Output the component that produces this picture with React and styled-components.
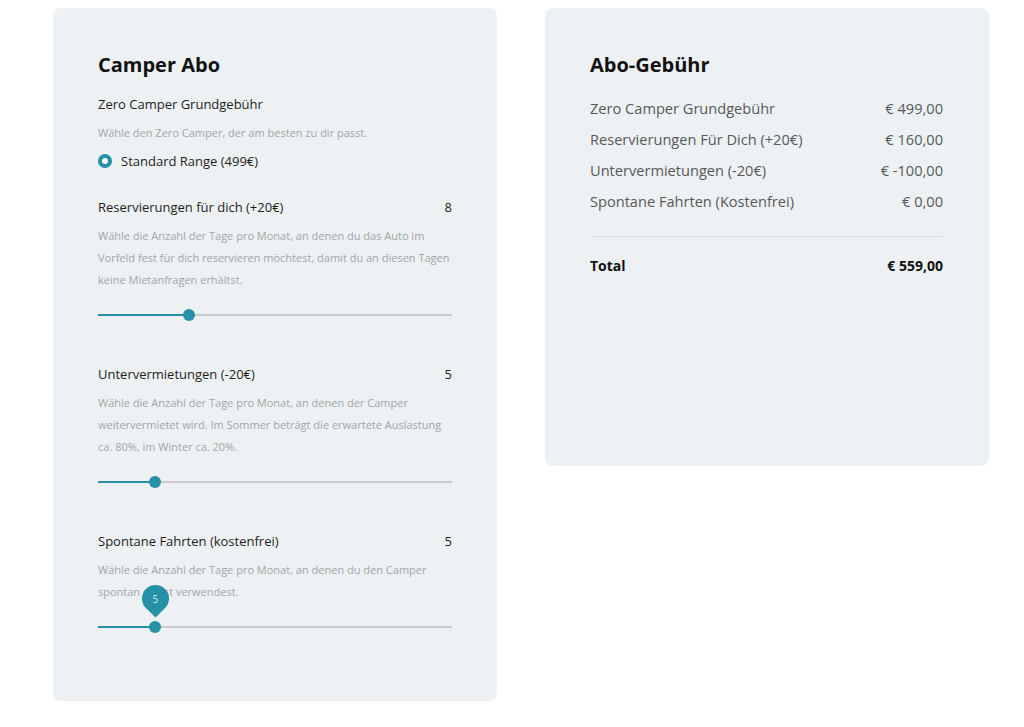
import { useState } from "react"
import styled, { createGlobalStyle } from "styled-components"

const TEAL = "#2590a6"
const MAX_DAYS = 31

const GlobalStyle = createGlobalStyle`
  * {
    box-sizing: border-box;
  }

  body {
    margin: 0;
    background: #fff;
    font-family: "Open Sans", "Noto Sans", sans-serif;
    color: #1c1c1c;
  }
`

function DaySlider({ value, onChange, showTip }) {
  const pct = (value / MAX_DAYS) * 100
  return (
    <SliderWrap>
      <Track>
        <Fill style={{ width: `${pct}%` }} />
      </Track>
      <Thumb style={{ left: `${pct}%` }} />
      {showTip && (
        <Tip style={{ left: `${pct}%` }}>
          <TipValue>{value}</TipValue>
        </Tip>
      )}
      <HiddenRange
        type="range"
        min="0"
        max={MAX_DAYS}
        value={value}
        onChange={(e) => onChange(Number(e.target.value))}
      />
    </SliderWrap>
  )
}

function Option({ title, value, text, onChange, showTip }) {
  return (
    <OptionBlock>
      <OptionHead>
        <Label>{title}</Label>
        <Label>{value}</Label>
      </OptionHead>
      <Hint>{text}</Hint>
      <DaySlider value={value} onChange={onChange} showTip={showTip} />
    </OptionBlock>
  )
}

const euro = (n) =>
  "€ " + n.toLocaleString("de-DE", { minimumFractionDigits: 2, maximumFractionDigits: 2 })

export default function App() {
  const [reserved, setReserved] = useState(8)
  const [sublet, setSublet] = useState(5)
  const [spontan, setSpontan] = useState(5)

  const base = 499
  const total = base + reserved * 20 - sublet * 20

  const rows = [
    ["Zero Camper Grundgebühr", base],
    ["Reservierungen Für Dich (+20€)", reserved * 20],
    ["Untervermietungen (-20€)", -sublet * 20],
    ["Spontane Fahrten (Kostenfrei)", 0],
  ]

  return (
    <>
      <GlobalStyle />
      <Page>
        <Card>
          <Heading>Camper Abo</Heading>
          <Label>Zero Camper Grundgebühr</Label>
          <Hint $tight>Wähle den Zero Camper, der am besten zu dir passt.</Hint>
          <RadioRow>
            <RadioDot />
            <Label>Standard Range (499€)</Label>
          </RadioRow>

          <Option
            title="Reservierungen für dich (+20€)"
            value={reserved}
            onChange={setReserved}
            text="Wähle die Anzahl der Tage pro Monat, an denen du das Auto im Vorfeld fest für dich reservieren möchtest, damit du an diesen Tagen keine Mietanfragen erhältst."
          />
          <Option
            title="Untervermietungen (-20€)"
            value={sublet}
            onChange={setSublet}
            text="Wähle die Anzahl der Tage pro Monat, an denen der Camper weitervermietet wird. Im Sommer beträgt die erwartete Auslastung ca. 80%, im Winter ca. 20%."
          />
          <Option
            title="Spontane Fahrten (kostenfrei)"
            value={spontan}
            onChange={setSpontan}
            showTip
            text="Wähle die Anzahl der Tage pro Monat, an denen du den Camper spontan selbst verwendest."
          />
        </Card>

        <Card $summary>
          <Heading>Abo-Gebühr</Heading>
          <FeeList>
            {rows.map(([name, amount]) => (
              <FeeRow key={name}>
                <span>{name}</span>
                <span>{euro(amount)}</span>
              </FeeRow>
            ))}
          </FeeList>
          <Divider />
          <TotalRow>
            <span>Total</span>
            <span>{euro(total)}</span>
          </TotalRow>
        </Card>
      </Page>
    </>
  )
}

const Page = styled.div`
  display: flex;
  align-items: flex-start;
  gap: 48px;
  padding: 8px 0 0 53px;
`

const Card = styled.section`
  width: 444px;
  background: #edf1f3;
  border-radius: 8px;
  padding: ${({ $summary }) => ($summary ? "43px 46px 0 45px" : "43px 45px 68px")};
  height: ${({ $summary }) => ($summary ? "458px" : "auto")};
  display: flex;
  flex-direction: column;
`

const Heading = styled.h2`
  margin: 0 0 15px;
  font-size: 20px;
  line-height: 28px;
  font-weight: 700;
  color: #111;
`

const Label = styled.div`
  font-size: 13px;
  line-height: 20px;
  color: #1e1e1e;
`

const Hint = styled.p`
  margin: ${({ $tight }) => ($tight ? "8px 0 7px" : "8px 0 0")};
  font-size: 11px;
  line-height: 22px;
  color: #a2a5a7;
`

const RadioRow = styled.div`
  display: flex;
  align-items: center;
  gap: 9px;
  margin-bottom: 26px;
`

const RadioDot = styled.span`
  width: 14px;
  height: 14px;
  border-radius: 50%;
  border: 4.5px solid ${TEAL};
  background: #fff;
`

const OptionBlock = styled.div`
  margin-bottom: 43px;

  &:last-child {
    margin-bottom: 0;
  }
`

const OptionHead = styled.div`
  display: flex;
  justify-content: space-between;
`

const SliderWrap = styled.div`
  position: relative;
  height: 12px;
  margin-top: 18px;
  display: flex;
  align-items: center;
`

const Track = styled.div`
  width: 100%;
  height: 2px;
  background: #c9cccd;
`

const Fill = styled.div`
  height: 100%;
  background: ${TEAL};
`

const Thumb = styled.span`
  position: absolute;
  top: 0;
  width: 12px;
  height: 12px;
  margin-left: -6px;
  border-radius: 50%;
  background: ${TEAL};
`

const Tip = styled.div`
  position: absolute;
  bottom: 21px;
  width: 27px;
  height: 27px;
  margin-left: -13.5px;
  border-radius: 50% 50% 0 50%;
  background: ${TEAL};
  transform: rotate(45deg);
  display: flex;
  align-items: center;
  justify-content: center;
`

const TipValue = styled.span`
  transform: rotate(-45deg);
  font-size: 10px;
  color: #d9eef2;
`

const HiddenRange = styled.input`
  position: absolute;
  inset: -6px 0;
  width: 100%;
  margin: 0;
  opacity: 0;
  cursor: pointer;
`

const FeeList = styled.div`
  margin-top: -1px;
`

const FeeRow = styled.div`
  display: flex;
  justify-content: space-between;
  font-size: 14.6px;
  line-height: 31px;
  color: #55595c;
`

const Divider = styled.hr`
  margin: 19px 0 19px;
  border: 0;
  border-top: 1px solid #d9dee1;
`

const TotalRow = styled.div`
  display: flex;
  justify-content: space-between;
  font-size: 14px;
  line-height: 20px;
  font-weight: 700;
  color: #111;
`
